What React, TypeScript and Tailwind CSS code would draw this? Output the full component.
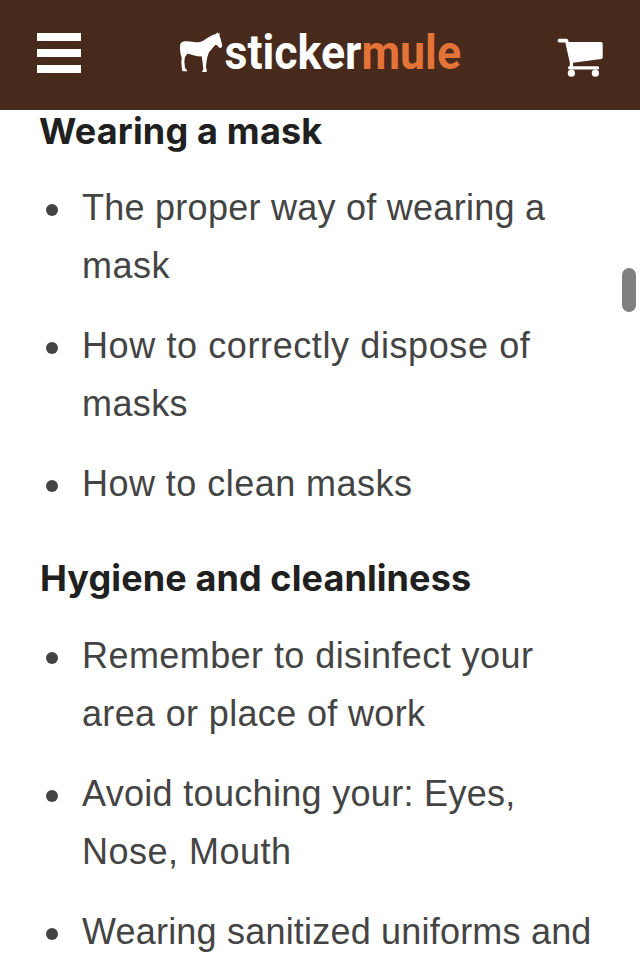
const sections = [
  {
    title: 'Wearing a mask',
    heading: 'tracking-[0.18px] ml-[-1px]',
    gap: 'gap-[29px]',
    items: [
      [
        { text: 'The proper way of wearing a', tracking: 'tracking-[0.26px]' },
        { text: 'mask', tracking: 'tracking-[0.5px]' },
      ],
      [
        { text: 'How to correctly dispose of', tracking: 'tracking-[0.6px]' },
        { text: 'masks', tracking: 'tracking-[0.4px]' },
      ],
      [{ text: 'How to clean masks', tracking: 'tracking-[0.46px]' }],
    ],
  },
  {
    title: 'Hygiene and cleanliness',
    heading: 'tracking-[0.1px]',
    gap: 'gap-[30px]',
    items: [
      [
        { text: 'Remember to disinfect your', tracking: 'tracking-[0.43px]' },
        { text: 'area or place of work', tracking: 'tracking-[0.34px]' },
      ],
      [
        { text: 'Avoid touching your: Eyes,', tracking: 'tracking-[0.31px]' },
        { text: 'Nose, Mouth', tracking: 'tracking-[0.5px]' },
      ],
      [{ text: 'Wearing sanitized uniforms and', tracking: 'tracking-[0.2px]' }],
    ],
  },
];

function Logo() {
  return (
    <svg width="300" height="68" viewBox="179 18 300 68" aria-label="Sticker Mule">
      <path
        fill="#fff"
        transform="translate(170 20) scale(.33333)"
        d="M30 78C30 69 36 65 44 64C58 62 73 68 87 67C97 65 107 57 117 51C125 46 132 43 138 42L142 37L144 41L150 38L148 45L152 57L157 77L154 83L147 83L142 76L136 75C130 80 125 88 117 97L112 111L109 128L108 142L111 153L109 156H97V152L100 148L98 128L95 109C79 111 64 102 52 101L45 111L43 124L45 143L51 151V154H38L36 149L34 128L35 113L31 99L30 88Z"
      />
      <text x="224.5" y="68.7" fontFamily="Roboto, sans-serif" fontSize="48" fontWeight="700" fill="#fff" textLength="236.5" lengthAdjust="spacingAndGlyphs">
        sticker<tspan fill="#e47338">mule</tspan>
      </text>
    </svg>
  );
}

function Cart() {
  return (
    <svg width="46" height="40" viewBox="557 38 46 40" fill="#fff" aria-label="Cart">
      <path d="M559.3 38.8H566.5Q568 38.8 568.3 40.4L568.7 42H601Q602.7 42 602.7 43.8V57.5Q602.7 58.8 601.2 59L573 62.8V66.2H597.8Q599.2 66.2 599.2 67.8T597.8 69.6H569.5Q568 69.6 568 67.8Q568 66.3 569.8 66V62.5L565.3 42.4H559.3Q557.6 42.4 557.6 40.6T559.3 38.8Z" />
      <circle cx="571.4" cy="73.2" r="3.6" />
      <circle cx="595.4" cy="73.2" r="3.6" />
    </svg>
  );
}

export default function App() {
  return (
    <div className="relative h-[959px] w-[640px] overflow-hidden bg-white">
      <header className="flex h-[110px] items-start bg-[#482a1c] pr-[37px] pl-[37px]">
        <button className="mt-[33px] flex w-11 flex-col gap-2" aria-label="Menu">
          <span className="h-2 w-full bg-white" />
          <span className="h-2 w-full bg-white" />
          <span className="h-2 w-full bg-white" />
        </button>
        <div className="mt-[18px] ml-[98px]"><Logo /></div>
        <div className="mt-[38px] ml-auto"><Cart /></div>
      </header>
      <main className="flex flex-col gap-[44px] pl-10">
        {sections.map((s) => (
          <section key={s.title} className={`flex flex-col ${s.gap}`}>
            <h2 className={`h-10 font-['Inter',sans-serif] text-[36px] leading-[42px] font-bold whitespace-nowrap text-[#202020] ${s.heading}`}>
              {s.title}
            </h2>
            <ul className="flex flex-col gap-[22px]">
              {s.items.map((lines) => (
                <li key={lines[0].text} className="flex font-['Liberation_Sans',Arial,sans-serif] text-[36px] leading-[58px] text-[#444]">
                  <span className="mt-[25px] mr-6 ml-[6px] size-3 shrink-0 rounded-full bg-[#444]" />
                  <p className="whitespace-nowrap">
                    {lines.map((line) => (
                      <span key={line.text} className={`block ${line.tracking}`}>{line.text}</span>
                    ))}
                  </p>
                </li>
              ))}
            </ul>
          </section>
        ))}
      </main>
      <div className="absolute top-[268px] right-1 h-11 w-[14px] rounded-full bg-[#808080]" />
    </div>
  );
}
